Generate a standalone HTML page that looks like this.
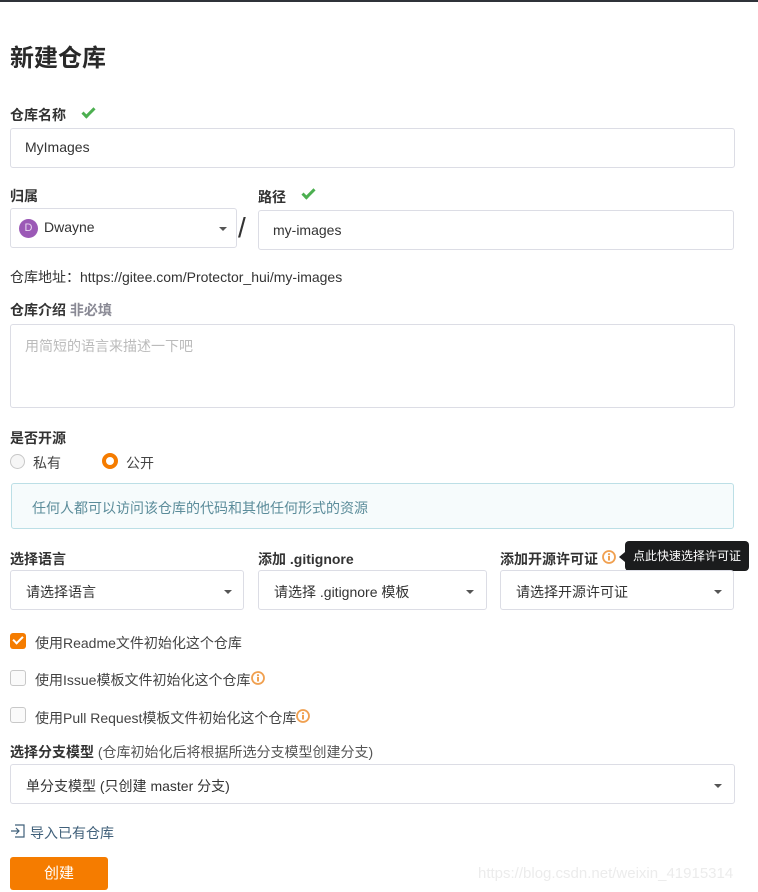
<!DOCTYPE html>
<html><head><meta charset="utf-8"><style>
*{box-sizing:border-box;margin:0;padding:0}
body{width:758px;height:892px;position:relative;background:#fff;font-family:"Liberation Sans","Noto Sans CJK SC",sans-serif;color:#333;overflow:hidden;font-size:14px}
.a{position:absolute;white-space:nowrap}
.lbl{font-size:14px;font-weight:bold;color:#333}
.box{position:absolute;border:1px solid #dcdde5;border-radius:3px;background:#fff}
.caret{position:absolute;width:0;height:0;border-left:4px solid transparent;border-right:4px solid transparent;border-top:4px solid #555}
.cb{position:absolute;width:16px;height:16px;border:1px solid #c8c8c8;border-radius:3px;background:#fafafa}
.info{position:absolute;width:14px;height:14px}
.chk{position:absolute;width:13px;height:7px;border-left:3px solid #4caf50;border-bottom:3px solid #4caf50;transform:rotate(-45deg)}
</style></head><body>
<svg width="0" height="0" style="position:absolute"><defs><symbol id="i" viewBox="0 0 14 14"><circle cx="7" cy="7" r="6" fill="none" stroke="#f0a050" stroke-width="1.8"/><circle cx="7" cy="4.2" r="1.1" fill="#f0a050"/><rect x="6" y="6" width="2" height="4.5" fill="#f0a050"/></symbol></defs></svg>
<div class="a" style="left:0;top:0;width:758px;height:2px;background:#2f3239"></div>
<div class="a" style="left:10px;top:38px;font-size:24px;font-weight:bold;color:#2a2a2a">新建仓库</div>

<div class="a lbl" style="left:10px;top:105px">仓库名称</div>
<div class="chk" style="left:82px;top:108px"></div>
<div class="box" style="left:10px;top:128px;width:725px;height:40px"></div>
<div class="a" style="left:25px;top:139px;color:#333">MyImages</div>

<div class="a lbl" style="left:10px;top:186px">归属</div>
<div class="a lbl" style="left:258px;top:187px">路径</div>
<div class="chk" style="left:302px;top:189px"></div>
<div class="box" style="left:10px;top:208px;width:227px;height:40px"></div>
<div class="a" style="left:19px;top:219px;width:19px;height:19px;border-radius:50%;background:#9b59b6;color:#e8d8f0;font-size:11px;text-align:center;line-height:19px">D</div>
<div class="a" style="left:44px;top:219px">Dwayne</div>
<div class="caret" style="left:219px;top:227px"></div>
<div class="a" style="left:238px;top:212px;font-size:28px;color:#333">/</div>
<div class="box" style="left:258px;top:210px;width:476px;height:40px"></div>
<div class="a" style="left:273px;top:222px">my-images</div>

<div class="a" style="left:10px;top:267px;font-size:14px;color:#333">仓库地址：https://gitee.com/Protector_hui/my-images</div>

<div class="a lbl" style="left:10px;top:300px">仓库介绍 <span style="color:#8a8a95">非必填</span></div>
<div class="box" style="left:10px;top:324px;width:725px;height:84px"></div>
<div class="a" style="left:25px;top:336px;color:#bbb">用简短的语言来描述一下吧</div>

<div class="a lbl" style="left:10px;top:428px">是否开源</div>
<div class="a" style="left:10px;top:454px;width:15px;height:15px;border:1px solid #c8c8c8;border-radius:50%;background:#f6f6f6"></div>
<div class="a" style="left:33px;top:453px;color:#444">私有</div>
<div class="a" style="left:102px;top:453px;width:16px;height:16px;border:4.5px solid #f57c00;border-radius:50%;background:#fff"></div>
<div class="a" style="left:126px;top:453px;color:#444">公开</div>

<div class="a" style="left:11px;top:483px;width:723px;height:46px;background:#f6fbfc;border:1px solid #bcdfe6;border-radius:3px"></div>
<div class="a" style="left:32px;top:498px;color:#5b8c9a">任何人都可以访问该仓库的代码和其他任何形式的资源</div>

<div class="a lbl" style="left:10px;top:549px">选择语言</div>
<div class="a lbl" style="left:258px;top:549px">添加 .gitignore</div>
<div class="a lbl" style="left:500px;top:549px">添加开源许可证</div>
<svg class="info" style="left:602px;top:550px"><use href="#i"/></svg>
<div class="a" style="left:619px;top:552px;width:0;height:0;border-top:5px solid transparent;border-bottom:5px solid transparent;border-right:6px solid #1b1c1d"></div>
<div class="a" style="left:625px;top:541px;width:124px;height:30px;background:#1b1c1d;border-radius:4px;color:#fff;font-size:12px;line-height:30px;text-align:center">点此快速选择许可证</div>

<div class="box" style="left:10px;top:570px;width:234px;height:40px"></div>
<div class="a" style="left:26px;top:582px">请选择语言</div>
<div class="caret" style="left:224px;top:590px"></div>
<div class="box" style="left:258px;top:570px;width:229px;height:40px"></div>
<div class="a" style="left:274px;top:582px">请选择 .gitignore 模板</div>
<div class="caret" style="left:466px;top:590px"></div>
<div class="box" style="left:500px;top:570px;width:234px;height:40px"></div>
<div class="a" style="left:516px;top:582px">请选择开源许可证</div>
<div class="caret" style="left:714px;top:590px"></div>

<div class="a" style="left:10px;top:633px;width:16px;height:16px;background:#f57c00;border-radius:3px"></div>
<div class="a" style="left:13px;top:636px;width:10px;height:6px;border-left:2.5px solid #fff;border-bottom:2.5px solid #fff;transform:rotate(-45deg)"></div>
<div class="a" style="left:35px;top:633px;font-size:14px;color:#444">使用Readme文件初始化这个仓库</div>
<div class="cb" style="left:10px;top:670px"></div>
<div class="a" style="left:35px;top:670px;font-size:14px;color:#444">使用Issue模板文件初始化这个仓库</div>
<svg class="info" style="left:251px;top:671px"><use href="#i"/></svg>
<div class="cb" style="left:10px;top:707px"></div>
<div class="a" style="left:35px;top:708px;font-size:14px;color:#444">使用Pull Request模板文件初始化这个仓库</div>
<svg class="info" style="left:296px;top:709px"><use href="#i"/></svg>

<div class="a" style="left:10px;top:742px;font-size:14px;color:#333"><b>选择分支模型</b> <span style="font-size:14px;color:#555">(仓库初始化后将根据所选分支模型创建分支)</span></div>
<div class="box" style="left:10px;top:764px;width:725px;height:40px"></div>
<div class="a" style="left:26px;top:776px">单分支模型 (只创建 master 分支)</div>
<div class="caret" style="left:714px;top:784px"></div>

<svg class="a" style="left:10px;top:823px" width="16" height="16" viewBox="0 0 16 16" fill="none" stroke="#40607a" stroke-width="1.2"><path d="M5 2h9v12H5M1 8h8M6 5l3 3-3 3"/></svg>
<div class="a" style="left:30px;top:823px;font-size:14px;color:#40607a">导入已有仓库</div>

<div class="a" style="left:10px;top:857px;width:98px;height:33px;background:#f57c00;border-radius:3px;color:#fff;font-size:15px;text-align:center;line-height:33px">创建</div>
<div class="a" style="left:478px;top:865px;font-size:15px;color:#ececec">https://blog.csdn.net/weixin_41915314</div>
</body></html>
